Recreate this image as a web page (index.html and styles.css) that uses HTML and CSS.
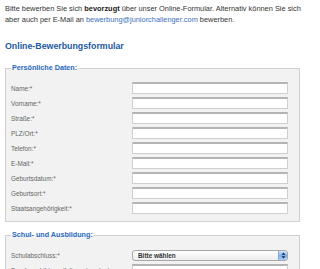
FILE: index.html
```html
<!DOCTYPE html>
<html lang="de">
<head>
    <meta charset="UTF-8">
    <meta name="viewport" content="width=device-width, initial-scale=1.0">
    <title>Bewerbung</title>
    <link rel="stylesheet" href="styles.css">
</head>
<body>
    <div class="page">
        <p class="intro">Bitte bewerben Sie sich <b>bevorzugt</b> über unser Online-Formular. Alternativ können Sie sich<br>aber auch per E-Mail an <a href="#">bewerbung@juniorchallenger.com</a> bewerben.</p>
        <h2>Online-Bewerbungsformular</h2>
        <form>
            <fieldset>
                <legend>Persönliche Daten:</legend>
                <div class="row"><label for="name">Name:*</label><input type="text" id="name"></div>
                <div class="row"><label for="vorname">Vorname:*</label><input type="text" id="vorname"></div>
                <div class="row"><label for="strasse">Straße:*</label><input type="text" id="strasse"></div>
                <div class="row"><label for="plz">PLZ/Ort:*</label><input type="text" id="plz"></div>
                <div class="row"><label for="telefon">Telefon:*</label><input type="text" id="telefon"></div>
                <div class="row"><label for="email">E-Mail:*</label><input type="text" id="email"></div>
                <div class="row"><label for="gebdatum">Geburtsdatum:*</label><input type="text" id="gebdatum"></div>
                <div class="row"><label for="gebort">Geburtsort:*</label><input type="text" id="gebort"></div>
                <div class="row"><label for="staat">Staatsangehörigkeit:*</label><input type="text" id="staat"></div>
            </fieldset>
            <fieldset>
                <legend>Schul- und Ausbildung:</legend>
                <div class="row"><label>Schulabschluss:*</label>
                    <div class="select">
                        <span>Bitte wählen</span>
                        <span class="select-btn">
                            <svg width="5" height="7" viewBox="0 0 5 7"><path d="M2.5 0.5 L4.5 2.8 H0.5 Z M2.5 6.5 L4.5 4.2 H0.5 Z" fill="#1b2a4a"/></svg>
                        </span>
                    </div>
                </div>
                <div class="row"><label for="beruf">Berufsausbildung (falls vorhanden):</label><input type="text" id="beruf"></div>
            </fieldset>
        </form>
    </div>
</body>
</html>
```

FILE: styles.css
```css
body {
    margin: 0;
    font-family: "Liberation Sans", Arial, sans-serif;
    background: #fff;
    color: #333;
}
.page {
    padding: 0 0 0 5px;
}
.intro {
    margin: 3px 0 0;
    font-size: 7.4px;
    line-height: 11px;
    width: 312px;
}
.intro b {
    color: #222;
}
.intro a {
    color: #3a6fc0;
    text-decoration: none;
}
h2 {
    margin: 15px 0 0;
    font-size: 8.8px;
    line-height: 12px;
    color: #1d5aa6;
}
form {
    margin-top: 11px;
}
fieldset {
    width: 278px;
    margin: 0 0 8px;
    padding: 9px 10px 7px 5px;
    border: 1px solid #d0d0d0;
    background: #f2f2f2;
    display: flex;
    flex-direction: column;
    gap: 3px;
}
legend {
    padding: 0 1px;
    font-size: 7.2px;
    line-height: 10px;
    color: #2a6abf;
    font-weight: bold;
}
.row {
    display: flex;
    align-items: center;
    height: 12px;
}
label {
    width: 121px;
    flex: none;
    font-size: 6.4px;
    color: #666;
}
input {
    width: 156px;
    height: 12px;
    box-sizing: border-box;
    margin: 0;
    padding: 0;
    background: #fff;
    border: 1px solid #cfcfcf;
    border-top: 2px solid #b4b4b4;
}
.select {
    width: 156px;
    height: 11px;
    box-sizing: border-box;
    display: flex;
    align-items: center;
    justify-content: space-between;
    border: 1px solid #a8a8a8;
    border-radius: 3px;
    background: linear-gradient(#ffffff, #ececec);
    font-size: 6.4px;
    font-weight: bold;
    color: #333;
    padding-left: 5px;
    overflow: hidden;
}
.select-btn {
    width: 8px;
    height: 100%;
    display: flex;
    align-items: center;
    justify-content: center;
    background: linear-gradient(#d6e8fc, #7fb1ee 50%, #a9cdf5);
    border-left: 1px solid #8aa8d2;
}
```
